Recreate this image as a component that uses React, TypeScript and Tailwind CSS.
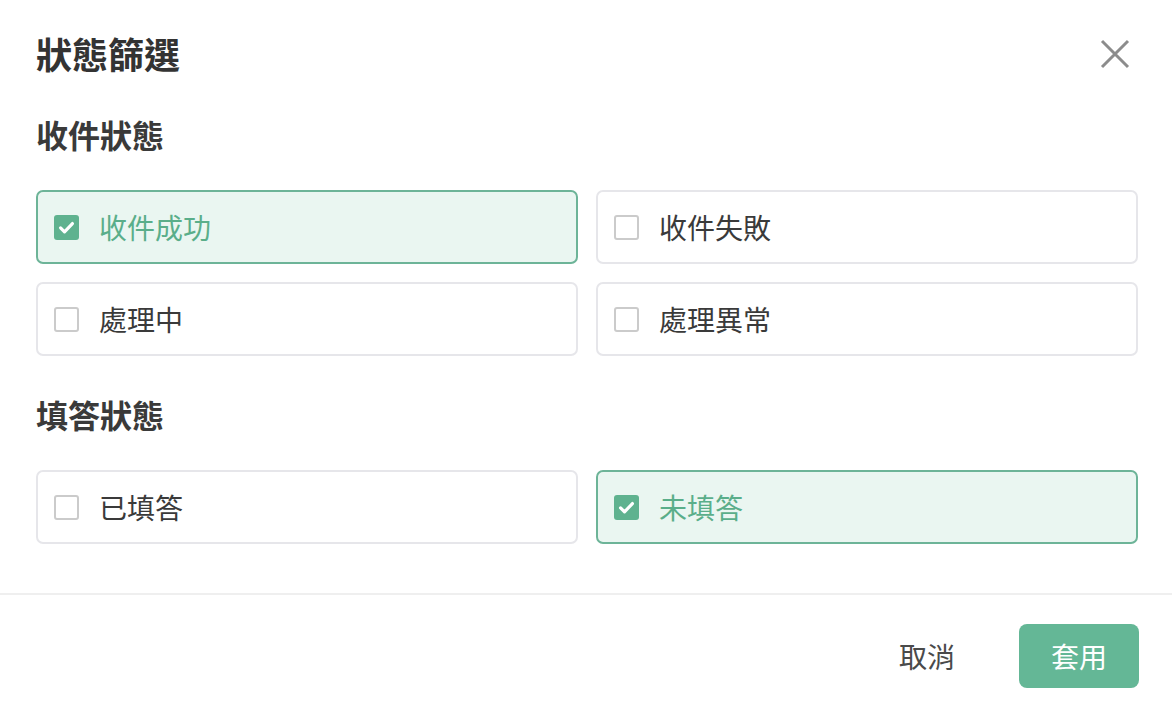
import { useState } from "react";

type Option = { id: string; label: string };

const receiveOptions: Option[] = [
  { id: "success", label: "收件成功" },
  { id: "failed", label: "收件失敗" },
  { id: "processing", label: "處理中" },
  { id: "error", label: "處理異常" },
];

const answerOptions: Option[] = [
  { id: "answered", label: "已填答" },
  { id: "unanswered", label: "未填答" },
];

const CheckOption = ({ label, checked, onToggle }: { label: string; checked: boolean; onToggle: () => void }) => (
  <button
    type="button"
    onClick={onToggle}
    className={
      checked
        ? "flex h-[74px] items-center gap-[20px] rounded-[7px] border-2 border-[#6db498] bg-[#eaf6f1] pl-[16px] text-left"
        : "flex h-[74px] items-center gap-[20px] rounded-[7px] border-2 border-[#e6e6ea] bg-white pl-[16px] text-left"
    }
  >
    {checked ? (
      <span className="flex h-[25px] w-[25px] shrink-0 items-center justify-center rounded-[3px] bg-[#5fb28f]">
        <svg width="19" height="19" viewBox="0 0 24 24" fill="none" stroke="white" strokeWidth="4" strokeLinecap="round" strokeLinejoin="round">
          <path d="M4.5 12.5l5 5L19.5 7" />
        </svg>
      </span>
    ) : (
      <span className="h-[25px] w-[25px] shrink-0 rounded-[3px] border-[2.5px] border-[#cbcbcb] bg-white" />
    )}
    <span className={checked ? "text-[28px] leading-[36px] text-[#5aae8a]" : "text-[28px] leading-[36px] text-[#3a3a3a]"}>
      {label}
    </span>
  </button>
);

const App = () => {
  const [selected, setSelected] = useState<Record<string, boolean>>({ success: true, unanswered: true });

  const toggle = (id: string) => setSelected((s) => ({ ...s, [id]: !s[id] }));

  return (
    <div
      className="flex h-[702px] w-full flex-col bg-white"
      style={{ fontFamily: '"Noto Sans CJK TC", "Noto Sans", sans-serif' }}
    >
      <div className="pl-[36px] pr-[34px]">
        <div className="flex items-center justify-between pt-[31px]">
          <h1 className="text-[36px] font-bold leading-[44px] text-[#333333]">狀態篩選</h1>
          <button type="button" className="mr-[8px] mt-[2px] text-[#8c8c8c]">
            <svg width="30" height="30" viewBox="0 0 30 30" fill="none" stroke="currentColor" strokeWidth="3">
              <path d="M2 2L28 28M28 2L2 28" />
            </svg>
          </button>
        </div>

        <h2 className="mt-[41px] text-[32px] font-semibold leading-[36px] text-[#3a3a3a]">收件狀態</h2>
        <div className="mt-[38px] grid grid-cols-2 gap-[18px]">
          {receiveOptions.map((o) => (
            <CheckOption key={o.id} label={o.label} checked={!!selected[o.id]} onToggle={() => toggle(o.id)} />
          ))}
        </div>

        <h2 className="mt-[40px] text-[32px] font-semibold leading-[36px] text-[#3a3a3a]">填答狀態</h2>
        <div className="mt-[38px] grid grid-cols-2 gap-[18px]">
          {answerOptions.map((o) => (
            <CheckOption key={o.id} label={o.label} checked={!!selected[o.id]} onToggle={() => toggle(o.id)} />
          ))}
        </div>
      </div>

      <div className="mt-[49px] h-[2px] bg-[#efefef]" />

      <div className="flex items-center justify-end pr-[33px] pt-[29px]">
        <button type="button" className="mr-[64px] text-[28px] leading-[36px] text-[#4a4a4a]">
          取消
        </button>
        <button
          type="button"
          className="flex h-[64px] w-[120px] items-center justify-center rounded-[8px] bg-[#64b796] text-[28px] text-white"
        >
          套用
        </button>
      </div>
    </div>
  );
};

export default App;
